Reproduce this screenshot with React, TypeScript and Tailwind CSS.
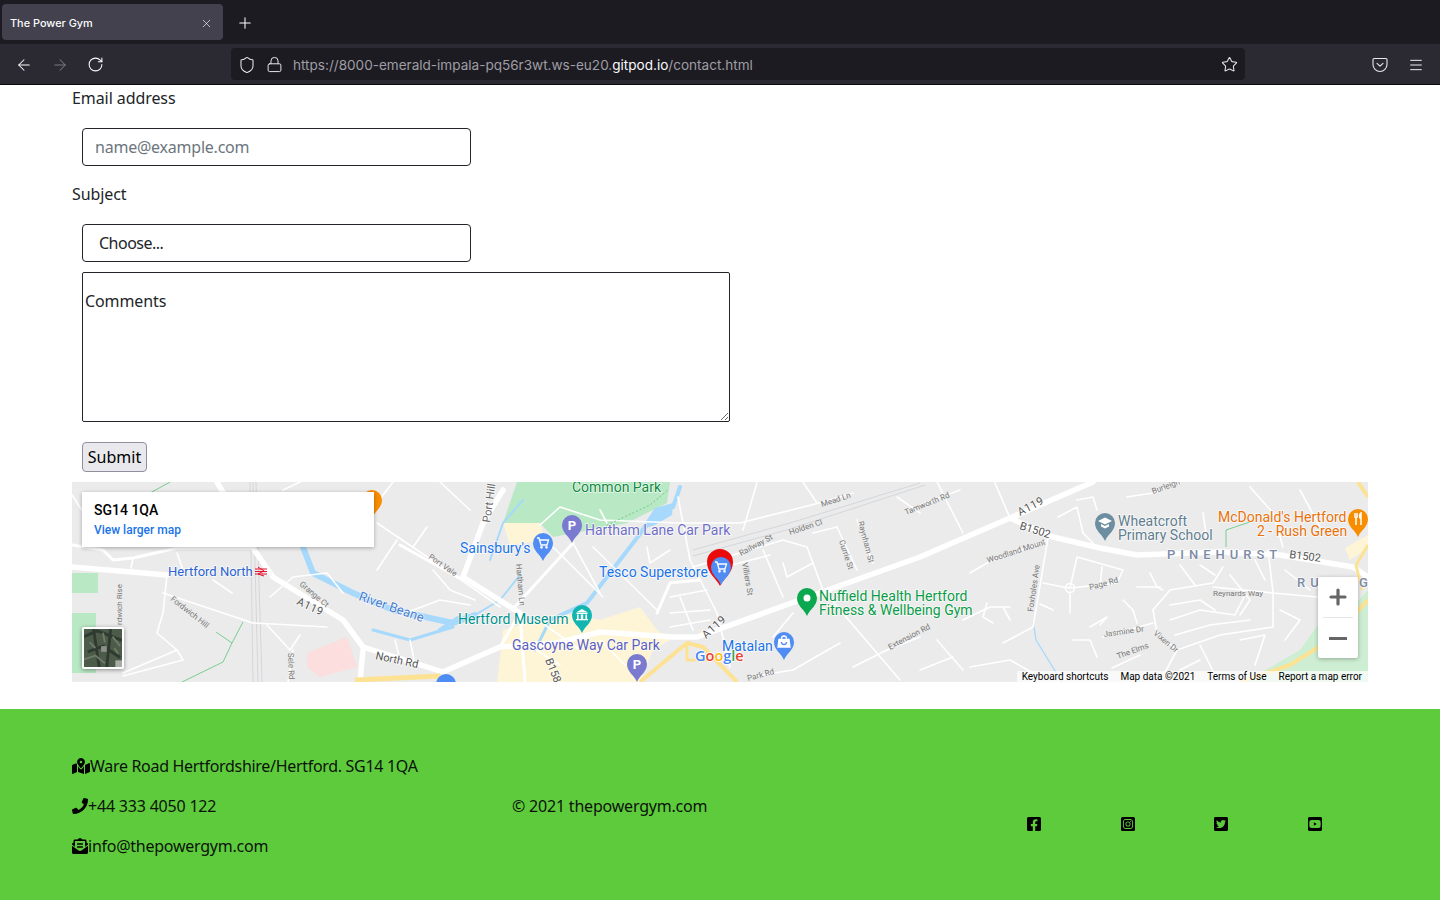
import { ArrowLeft, ArrowRight, Lock, Menu, Plus, RotateCw, Shield, Star, X } from "lucide-react"
import {
  FaEnvelopeOpenText,
  FaFacebookSquare,
  FaInstagramSquare,
  FaMapMarkedAlt,
  FaPhone,
  FaTwitterSquare,
  FaYoutubeSquare,
} from "react-icons/fa"

const MAJOR_ROADS = [
  "M217,482 L224,494",
  "M253,548 L273,577 343,620 363,647 443,672 477,657 500,647 557,643 600,632 673,637 697,637 920,557 1010,518 1093,482",
  "M1010,518 L1053,537 1100,548 1137,555 1220,552 1280,555 1353,567 1368,577",
  "M72,567 L167,575",
  "M503,490 L483,523 463,577 520,613",
  "M363,650 L360,682",
]

const MID_ROADS = [
  "M72,545 L103,550 113,560 133,558 177,548 220,548 253,548",
  "M463,580 L400,545",
  "M512,610 L573,543",
  "M657,613 L670,583 700,580",
  "M500,647 L520,613 525,682",
]

const MINOR_ROADS = [
  // west of the railway
  "M167,575 L163,613 157,633 177,650 123,673",
  "M163,593 L253,623 327,627",
  "M133,558 L131,568",
  "M177,553 L183,570",
  "M213,580 L232,593",
  "M72,495 L85,515 100,530",
  "M267,625 L290,650",
  "M290,650 L300,635",
  "M270,597 L293,577 327,573 343,593",
  "M293,650 L288,682",
  "M177,650 L183,660 123,676",
  // Port Vale
  "M377,523 L457,577 500,607",
  "M397,540 L377,570",
  "M413,547 L427,527",
  "M393,482 L377,503",
  "M433,570 L450,590 475,600",
  "M400,615 L440,600 470,605",
  "M395,640 L400,660",
  "M410,640 L415,665",
  "M440,482 L470,510",
  "M283,490 L300,482",
  // Hartham and the town
  "M553,547 L603,597",
  "M593,547 L657,610",
  "M573,543 L600,593",
  "M600,510 L607,523",
  "M540,525 L560,507 600,520 680,523 740,523 823,502 853,493",
  "M647,547 L650,563 670,550",
  "M670,597 L707,590",
  "M670,613 L710,610",
  "M670,627 L710,620",
  "M680,597 L693,630",
  "M678,497 L690,560 717,613 730,667",
  "M743,530 L757,483",
  "M803,482 L817,503",
  "M897,497 L920,513",
  "M520,640 L560,665",
  "M545,625 L580,650",
  "M600,640 L625,665",
  // Railway St area
  "M693,567 L783,540 807,547 823,590 900,680",
  "M763,550 L783,597",
  "M783,563 L787,577 813,563",
  "M837,527 L857,570",
  "M857,520 L873,563",
  "M813,533 L837,527",
  "M773,637 L793,613",
  "M853,667 L887,650 920,637",
  "M748,677 L793,670 840,643",
  "M693,575 L770,555",
  // east of the A119 split
  "M920,505 L960,490",
  "M937,482 L963,533",
  "M995,483 L1010,518",
  "M1047,540 L987,563 970,573",
  "M1048,538 L1033,627 1003,643",
  "M1040,604 L1053,610",
  "M963,620 L990,607 1010,607",
  "M987,603 L983,617 993,623",
  "M1003,607 L1010,620",
  "M937,640 L963,670",
  "M970,667 L1010,660 1033,673",
  "M920,670 L953,657",
  "M1043,583 L1063,587 1070,588 1117,583 1123,570 1077,557 1070,588",
  "M1070,593 L1070,613",
  "M1102,567 L1100,587",
  "M1077,500 L1093,497 1097,510",
  "M1058,517 L1077,507 1083,533 1093,543",
  "M1127,497 L1153,493 1180,483",
  // Pinehurst estate
  "M1223,567 L1213,583 1170,590 1153,610 1157,633 1177,650 1220,635 1273,627",
  "M1273,592 L1273,627",
  "M1213,587 L1273,593 1317,597",
  "M1268,550 L1273,592",
  "M1090,627 L1107,617 1100,625",
  "M1073,640 L1090,640 1097,657",
  "M1103,637 L1153,623",
  "M1123,600 L1133,610 1137,623",
  "M1137,587 L1160,587",
  "M1150,573 L1157,587 1163,590",
  "M1170,605 L1200,600 1215,610",
  "M1170,620 L1200,610 1235,615 1245,595",
  "M1175,635 L1210,625 1250,620",
  "M1230,575 L1250,600 1240,615",
  "M1180,565 L1195,585",
  "M1200,565 L1215,575",
  "M1255,560 L1265,580",
  "M1285,570 L1310,590",
  "M1280,610 L1300,620 1285,640",
  "M1240,640 L1265,635 1255,665",
  "M1200,645 L1215,675",
  "M1180,670 L1200,660",
  "M1250,487 L1273,513 1283,547",
  "M1300,490 L1320,527",
  "M1203,513 L1207,540",
  "M1160,682 L1177,650",
  "M1112,668 L1140,655",
]

const MAP_LABELS: { text: string; x: number; y: number; size: number; fill: string; rotate?: number; weight?: number; spacing?: number }[] = [
  { text: "Common Park", x: 572, y: 492, size: 14, fill: "#0d8a3f" },
  { text: "Hartham Lane Car Park", x: 585, y: 535, size: 14, fill: "#6f6fc8" },
  { text: "Sainsbury's", x: 460, y: 553, size: 14, fill: "#1a73e8" },
  { text: "Tesco Superstore", x: 599, y: 577, size: 14, fill: "#1a73e8" },
  { text: "Hertford North", x: 168, y: 576, size: 13, fill: "#2a62d0" },
  { text: "Hertford Museum", x: 458, y: 624, size: 14, fill: "#00918f" },
  { text: "Gascoyne Way Car Park", x: 512, y: 650, size: 14, fill: "#5c5fc0" },
  { text: "Matalan", x: 722, y: 651, size: 14, fill: "#1a73e8" },
  { text: "Nuffield Health Hertford", x: 819, y: 601, size: 14, fill: "#0a9d48" },
  { text: "Fitness & Wellbeing Gym", x: 819, y: 615, size: 14, fill: "#0a9d48" },
  { text: "Wheatcroft", x: 1118, y: 526, size: 14, fill: "#607d8f" },
  { text: "Primary School", x: 1118, y: 540, size: 14, fill: "#607d8f" },
  { text: "McDonald's Hertford", x: 1218, y: 522, size: 14, fill: "#e8710a" },
  { text: "2 - Rush Green", x: 1257, y: 536, size: 14, fill: "#e8710a" },
  { text: "PINEHURST", x: 1167, y: 559, size: 13, fill: "#7d8ba5", weight: 500, spacing: 5 },
  { text: "RU", x: 1297, y: 587, size: 13, fill: "#7d8ba5", weight: 500, spacing: 5 },
  { text: "G", x: 1359, y: 587, size: 13, fill: "#7d8ba5", weight: 500 },
  { text: "River Beane", x: 358, y: 600, size: 13, fill: "#4e7fd0", rotate: 19 },
  { text: "A119", x: 296, y: 604, size: 11, fill: "#555", rotate: 25, spacing: 0.6 },
  { text: "A119", x: 706, y: 639, size: 11, fill: "#555", rotate: -42, spacing: 0.6 },
  { text: "A119", x: 1020, y: 516, size: 11, fill: "#555", rotate: -28, spacing: 0.6 },
  { text: "B1502", x: 1019, y: 529, size: 11, fill: "#555", rotate: 17 },
  { text: "B1502", x: 1289, y: 558, size: 11, fill: "#555", rotate: 7 },
  { text: "B158", x: 545, y: 660, size: 11, fill: "#555", rotate: 68 },
  { text: "North Rd", x: 375, y: 659, size: 11, fill: "#555", rotate: 12 },
  { text: "Port Hill", x: 490, y: 523, size: 11, fill: "#666", rotate: -82 },
  { text: "Port Vale", x: 428, y: 558, size: 8, fill: "#777", rotate: 35 },
  { text: "Hartham Ln", x: 516, y: 564, size: 8, fill: "#777", rotate: 85 },
  { text: "Grange Ct", x: 299, y: 585, size: 8, fill: "#777", rotate: 40 },
  { text: "Fordwich Hill", x: 170, y: 600, size: 8, fill: "#777", rotate: 38 },
  { text: "rdwich Rise", x: 122, y: 625, size: 8, fill: "#777", rotate: -90 },
  { text: "Sele Rd", x: 288, y: 653, size: 8, fill: "#777", rotate: 88 },
  { text: "Railway St", x: 741, y: 556, size: 8, fill: "#777", rotate: -28 },
  { text: "Holden Cl", x: 790, y: 535, size: 8, fill: "#777", rotate: -18 },
  { text: "Mead Ln", x: 822, y: 507, size: 8, fill: "#777", rotate: -18 },
  { text: "Tamworth Rd", x: 906, y: 515, size: 8, fill: "#777", rotate: -22 },
  { text: "Villiers St", x: 742, y: 563, size: 8, fill: "#777", rotate: 80 },
  { text: "Currie St", x: 839, y: 541, size: 8, fill: "#777", rotate: 72 },
  { text: "Raynham St", x: 858, y: 522, size: 8, fill: "#777", rotate: 75 },
  { text: "Extension Rd", x: 890, y: 650, size: 8, fill: "#777", rotate: -28 },
  { text: "Park Rd", x: 748, y: 681, size: 8, fill: "#777", rotate: -15 },
  { text: "Woodland Mount", x: 988, y: 563, size: 8, fill: "#777", rotate: -18 },
  { text: "Foxholes Ave", x: 1033, y: 612, size: 8, fill: "#777", rotate: -82 },
  { text: "Page Rd", x: 1090, y: 590, size: 8, fill: "#777", rotate: -15 },
  { text: "Burleigh", x: 1153, y: 494, size: 8, fill: "#777", rotate: -20 },
  { text: "Reynards Way", x: 1213, y: 596, size: 8, fill: "#777" },
  { text: "Jasmine Dr", x: 1104, y: 637, size: 8, fill: "#777", rotate: -8 },
  { text: "Vixen Dr", x: 1153, y: 634, size: 8, fill: "#777", rotate: 40 },
  { text: "The Elms", x: 1118, y: 659, size: 8, fill: "#777", rotate: -20 },
]

type PinKind = "park" | "cart" | "bag" | "museum" | "school" | "food" | "dot" | "none"

const MAP_PINS: { x: number; y: number; fill: string; kind: PinKind }[] = [
  { x: 372, y: 503, fill: "#f88d00", kind: "none" },
  { x: 572, y: 528, fill: "#7a7ad0", kind: "park" },
  { x: 637, y: 667, fill: "#7a7ad0", kind: "park" },
  { x: 543, y: 546, fill: "#4f8df5", kind: "cart" },
  { x: 784, y: 645, fill: "#4f8df5", kind: "bag" },
  { x: 446, y: 687, fill: "#4f8df5", kind: "none" },
  { x: 582, y: 618, fill: "#12b5b0", kind: "museum" },
  { x: 1105, y: 526, fill: "#6d8ea0", kind: "school" },
  { x: 1358, y: 522, fill: "#f88d00", kind: "food" },
  { x: 807, y: 601, fill: "#0aa84f", kind: "dot" },
]

function PinGlyph({ kind }: { kind: PinKind }) {
  // drawn around 0,0 which is the middle of the pin head
  switch (kind) {
    case "park":
      return <text y={4.5} textAnchor="middle" fontSize={13} fontWeight={700} fill="#fff">P</text>
    case "cart":
      return (
        <g fill="none" stroke="#fff" strokeWidth={1.3}>
          <path d="M-6,-5 H-4 L-2,2 H4 L5.5,-3 H-3.4" />
          <circle cx={-1.5} cy={4.3} r={0.7} fill="#fff" />
          <circle cx={3.5} cy={4.3} r={0.7} fill="#fff" />
        </g>
      )
    case "bag":
      return (
        <g fill="none" stroke="#fff" strokeWidth={1.3}>
          <path d="M-5,-2.5 H5 L6,5 H-6 Z" fill="#fff" />
          <path d="M-2.5,-2 V-3.5 A2.5,2.5 0 0 1 2.5,-3.5 V-2" />
          <path d="M-2.5,0 A2.5,2.5 0 0 0 2.5,0" stroke="#4f8df5" />
        </g>
      )
    case "museum":
      return (
        <g fill="#fff">
          <path d="M-6,-2.5 L0,-6 6,-2.5 Z" />
          <rect x={-5.5} y={-2} width={11} height={1} />
          <rect x={-5} y={-0.5} width={1.6} height={4.5} />
          <rect x={-1.2} y={-0.5} width={2.4} height={4.5} />
          <rect x={3.4} y={-0.5} width={1.6} height={4.5} />
          <rect x={-6} y={4} width={12} height={1.3} />
        </g>
      )
    case "school":
      return (
        <g fill="#fff">
          <path d="M-7,-2 L0,-5.5 7,-2 0,1.5 Z" />
          <path d="M-4,1 L0,3 4,1 V3.5 L0,5.5 -4,3.5 Z" />
        </g>
      )
    case "food":
      return (
        <g fill="none" stroke="#fff" strokeWidth={1.5}>
          <path d="M-3,-6 V-2 A1.2,1.2 0 0 0 -1,-2 V-6 M-2,-1 V6" />
          <path d="M3,6 V-6 C1,-5 1,-1 3,0" />
        </g>
      )
    case "dot":
      return <circle r={3.5} fill="#fff" />
    default:
      return null
  }
}

function Pin({ x, y, fill, kind }: { x: number; y: number; fill: string; kind: PinKind }) {
  return (
    <g>
      <path d={`M${x},${y + 15} C${x - 3},${y + 8} ${x - 10},${y + 5} ${x - 10},${y - 3} A10,10 0 1 1 ${x + 10},${y - 3} C${x + 10},${y + 5} ${x + 3},${y + 8} ${x},${y + 15} Z`} fill={fill} />
      <g transform={`translate(${x} ${y - 3})`}>
        <PinGlyph kind={kind} />
      </g>
    </g>
  )
}

function MapDrawing() {
  return (
    <svg viewBox="72 482 1296 200" className="block w-full h-full" fontFamily="Roboto, sans-serif">
      <rect x={72} y={482} width={1296} height={200} fill="#ebebeb" />
      {/* parks, town centre, hospital */}
      <polygon points="503,523 517,482 670,482 667,503 627,523 553,537 540,523" fill="#b9e8c4" />
      <polygon points="503,523 540,523 545,540 510,545" fill="#fdf5d5" />
      <path d="M503,630 L560,613 600,620 640,607 657,630 670,640 653,650 640,682 497,682 Z" fill="#fdf5d5" />
      <rect x={72} y={573} width={26} height={20} fill="#b9e8c4" />
      <rect x={72} y={613} width={24} height={60} fill="#b9e8c4" />
      <polygon points="307,653 347,637 357,667 320,677 307,667" fill="#fbdedd" />
      <path d="M1245,682 L1300,650 1320,622 1335,625 1368,590 1368,682 Z" fill="#cdeed2" />
      <path d="M1345,548 L1368,535 1368,548 1350,560 Z" fill="#fdf5d5" />

      <g fill="none" stroke="#a6d9fb" strokeLinejoin="round" strokeLinecap="round">
        <path d="M303,547 L313,573 353,593 393,610 453,623 475,615" strokeWidth={6} />
        <path d="M475,615 L500,600 520,575" strokeWidth={2} />
        <path d="M373,630 L410,640 453,627" strokeWidth={3} />
        <path d="M440,630 L458,618" strokeWidth={4} />
        <path d="M550,620 L587,603 643,530 655,515 673,507 680,487" strokeWidth={4} />
        <path d="M550,620 L535,650" strokeWidth={3} />
        <path d="M523,500 L503,523 490,560" strokeWidth={2} />
        <path d="M1034,627 L1036,640 1062,682" strokeWidth={1.3} />
      </g>
      <polygon points="640,530 655,508 673,503 672,515 655,525" fill="#a6d9fb" />

      <g fill="none" stroke="#d3d6da" strokeWidth={1}>
        <path d="M250,482 L253,682 M253,482 L258,682 M256,482 L262,682" />
        <path d="M693,550 L790,523 920,483 M693,556 L790,529 925,485" />
      </g>

      <g fill="none" stroke="#fff" strokeLinejoin="round" strokeLinecap="round">
        {MINOR_ROADS.map(d => <path key={d} d={d} strokeWidth={1.6} />)}
        {MID_ROADS.map(d => <path key={d} d={d} strokeWidth={3} />)}
        {MAJOR_ROADS.map(d => <path key={d} d={d} strokeWidth={5.5} />)}
        <circle cx={1070} cy={588} r={4.5} strokeWidth={1.6} />
      </g>

      <g fill="none" stroke="#fde293" strokeLinejoin="round">
        <path d="M640,682 L687,643 703,647 737,682" strokeWidth={4} />
        <path d="M687,645 L687,660 707,660" strokeWidth={3} />
        <path d="M355,680 L440,676" strokeWidth={5} />
        <path d="M1240,682 L1290,665 1330,640 1368,600" strokeWidth={4} />
        <path d="M1368,545 L1356,565 1362,590" strokeWidth={3} />
        <path d="M1358,482 L1368,497" strokeWidth={4} />
      </g>

      <g fill="none" stroke="#5bc57c" strokeWidth={0.8}>
        <path d="M216,632 L232,643 243,622 M232,643 L223,662 182,682" />
        <path d="M170,482 L150,493" />
        <path d="M1226,547 L1226,530 1250,522" />
        <path d="M607,525 L650,505 668,490" strokeDasharray="2 2" />
      </g>

      {MAP_PINS.map(p => <Pin key={`${p.x}-${p.y}`} {...p} />)}

      {/* the address marker sits behind the Tesco pin */}
      <path d="M720,586 C716,578 707,573 707,562 A13,13 0 1 1 733,562 C733,573 724,578 720,586 Z" fill="#ea0a0a" />
      <Pin x={721} y={570} fill="#4f8df5" kind="cart" />

      {MAP_LABELS.map(l => (
        <text
          key={`${l.text}-${l.x}`}
          x={l.x}
          y={l.y}
          fontSize={l.size}
          fill={l.fill}
          fontWeight={l.weight}
          letterSpacing={l.spacing}
          stroke="#fff"
          strokeWidth={l.size > 10 ? 1.5 : 0}
          strokeOpacity={0.8}
          paintOrder="stroke"
          transform={l.rotate ? `rotate(${l.rotate} ${l.x} ${l.y})` : undefined}
        >
          {l.text}
        </text>
      ))}

      <path d="M255,569 H267 M255,571.5 H267 M255,574 H267 M258,567 L264,571 258,574 264,576" fill="none" stroke="#e8112d" strokeWidth={1} />

      <text x={695} y={661} fontSize={14.5} fontFamily="Open Sans, sans-serif" fontWeight={600} stroke="#fff" strokeWidth={1.5} paintOrder="stroke">
        <tspan fill="#4285f4">G</tspan>
        <tspan fill="#ea4335">o</tspan>
        <tspan fill="#fbbc05">o</tspan>
        <tspan fill="#4285f4">g</tspan>
        <tspan fill="#34a853">l</tspan>
        <tspan fill="#ea4335">e</tspan>
      </text>
    </svg>
  )
}

function SatelliteThumb() {
  return (
    <svg viewBox="0 0 40 40" className="block w-full h-full">
      <rect width={40} height={40} fill="#4d5c4a" />
      <path d="M0,8 L14,2 40,12 M4,24 L20,18 38,30 M10,0 L16,40 M28,0 L24,40" stroke="#2f3a30" strokeWidth={3} fill="none" />
      <path d="M0,32 L12,28 22,36 M30,8 L38,18 M6,14 L12,20 M20,4 L22,14 M32,20 L36,26" stroke="#6e7a66" strokeWidth={2} fill="none" />
      <rect x={18} y={18} width={6} height={6} fill="#8d9288" />
      <rect x={33} y={33} width={7} height={7} fill="#a8aca2" />
    </svg>
  )
}

function PocketIcon() {
  return (
    <svg width={16} height={16} viewBox="0 0 16 16" fill="none" stroke="#e8e8ea" strokeWidth={1.1} strokeLinecap="round" strokeLinejoin="round">
      <path d="M2.2 1.5 H13.8 A1.2 1.2 0 0 1 15 2.7 V7.5 A7 7 0 0 1 1 7.5 V2.7 A1.2 1.2 0 0 1 2.2 1.5 Z" />
      <path d="M5 6.3 L8 9.2 11 6.3" />
    </svg>
  )
}

function BrowserChrome() {
  return (
    <header className="font-['Inter',sans-serif]">
      <div className="h-[44px] bg-[#1c1b22] flex items-center pl-[2px]">
        <div className="w-[221px] h-[36px] bg-[#42414d] rounded-[4px] flex items-center justify-between pl-2 pr-[10px] pt-[2px] text-[#fbfbfe]">
          <span className="text-[10.9px] font-medium">The Power Gym</span>
          <X size={13} strokeWidth={1.2} />
        </div>
        <Plus size={18} strokeWidth={1.4} color="#fbfbfe" className="ml-[13px] mt-px" />
      </div>
      <div className="h-[41px] bg-[#2b2a33] border-b border-[#0c0c0d] flex items-center pl-[15px] pr-[16px]">
        <ArrowLeft size={18} strokeWidth={1.4} color="#fbfbfe" className="mt-px" />
        <ArrowRight size={18} strokeWidth={1.4} color="#77767d" className="ml-[18px] mt-px" />
        <RotateCw size={17} strokeWidth={1.5} color="#fbfbfe" className="ml-[18px] mt-px" />
        <div className="ml-[127px] w-[1014px] h-[32px] bg-[#1c1b22] rounded-[4px] flex items-center px-[7px]">
          <Shield size={18} strokeWidth={1.4} color="#e8e8ea" className="mt-px" />
          <Lock size={17} strokeWidth={1.4} color="#e8e8ea" className="ml-[10px]" />
          <span className="ml-[10px] pt-[2px] text-[13.56px] text-[#9f9ea4] whitespace-nowrap">
            https://8000-emerald-impala-pq56r3wt.ws-eu20.<span className="text-[#fbfbfe]">gitpod.io</span>/contact.html
          </span>
          <Star size={17} strokeWidth={1.5} color="#e8e8ea" className="ml-auto mt-px" />
        </div>
        <div className="ml-auto flex items-center gap-[20px] mt-px">
          <PocketIcon />
          <Menu size={16} strokeWidth={1.4} color="#fbfbfe" />
        </div>
      </div>
    </header>
  )
}

function ContactForm() {
  return (
    <form className="flex flex-col text-[#212529]">
      <label className="mt-px leading-[24px] tracking-[-0.08px]">Email address</label>
      <input
        type="email"
        placeholder="name@example.com"
        className="mt-[18px] ml-[10px] w-[389px] h-[38px] border border-[#212529] rounded-[4px] px-3 outline-none tracking-[-0.23px] placeholder:text-[#6c757d]"
      />
      <label className="mt-[16px] leading-[24px] tracking-[-0.1px]">Subject</label>
      <select className="mt-[18px] ml-[10px] w-[389px] h-[38px] border border-[#212529] rounded-[4px] pl-4 outline-none appearance-none bg-white tracking-[-0.5px]">
        <option>Choose...</option>
      </select>
      <textarea
        placeholder="Comments"
        className="block mt-[10px] ml-[10px] w-[648px] h-[150px] border border-[#212529] rounded-[2px] px-[2px] pt-[16px] outline-none tracking-[-0.1px] placeholder:text-[#212529]"
      />
      <button
        type="button"
        className="mt-[20px] ml-[10px] w-[65px] h-[30px] bg-[#e9e9ed] border border-[#8f8f9d] rounded-[4px] text-black"
      >
        Submit
      </button>
    </form>
  )
}

function MapEmbed() {
  return (
    <div className="relative mt-[10px] h-[200px] overflow-hidden font-['Roboto',sans-serif]">
      <MapDrawing />
      <div className="absolute left-[10px] top-[10px] w-[292px] h-[55px] bg-white shadow-[0_1px_4px_rgba(0,0,0,0.3)] pl-[12px] pt-[9px]">
        <div className="text-[14px] leading-[18px] font-medium text-black">SG14 1QA</div>
        <div className="mt-[3px] text-[12px] leading-[16px] font-medium text-[#1a73e8]">View larger map</div>
      </div>
      <div className="absolute left-[10px] top-[145px] w-[42px] h-[42px] border-2 border-white rounded-[2px] shadow-[0_1px_4px_rgba(0,0,0,0.4)]">
        <SatelliteThumb />
      </div>
      <div className="absolute right-[10px] top-[95px] w-[40px] h-[81px] bg-white shadow-[0_1px_4px_rgba(0,0,0,0.3)] rounded-[2px] flex flex-col items-center text-[#666]">
        <div className="h-[40px] flex items-center justify-center">
          <Plus size={24} strokeWidth={3.2} />
        </div>
        <div className="w-[30px] h-px bg-[#e6e6e6]" />
        <div className="h-[40px] flex items-center justify-center">
          <div className="w-[18px] h-[3px] bg-[#666]" />
        </div>
      </div>
      <div className="absolute right-0 bottom-0 h-[11px] bg-white/70 flex items-center gap-[12px] pl-[5px] pr-[6px] text-[10px] leading-[11px] text-black whitespace-nowrap">
        <span>Keyboard shortcuts</span>
        <span>Map data ©2021</span>
        <span>Terms of Use</span>
        <span>Report a map error</span>
      </div>
    </div>
  )
}

function Footer() {
  return (
    <footer className="mt-[27px] h-[191px] bg-[#5ecb3c] px-[72px] pt-[2px] flex items-center text-[#0b130a]">
      <div className="w-[440px] flex flex-col gap-[16px]">
        <p className="flex items-center leading-[24px] tracking-[-0.31px]"><FaMapMarkedAlt size={18} color="#000" />Ware Road Hertfordshire/Hertford. SG14 1QA</p>
        <p className="flex items-center leading-[24px] tracking-[-0.2px]"><FaPhone size={16} color="#000" />+44 333 4050 122</p>
        <p className="flex items-center leading-[24px] tracking-[-0.25px]"><FaEnvelopeOpenText size={16} color="#000" />info@thepowergym.com</p>
      </div>
      <p className="w-[515px] leading-[24px] tracking-[-0.2px]">© 2021 thepowergym.com</p>
      <div className="w-[297px] pt-[36px] -ml-px flex justify-between">
        <FaFacebookSquare size={16} color="#000" />
        <FaInstagramSquare size={16} color="#000" />
        <FaTwitterSquare size={16} color="#000" />
        <FaYoutubeSquare size={16} color="#000" />
      </div>
    </footer>
  )
}

export default function App() {
  return (
    <div className="w-[1440px] h-[900px] overflow-hidden bg-white font-['Noto_Sans',sans-serif] text-[16px]">
      <BrowserChrome />
      <main className="px-[72px]">
        <ContactForm />
        <MapEmbed />
      </main>
      <Footer />
    </div>
  )
}
